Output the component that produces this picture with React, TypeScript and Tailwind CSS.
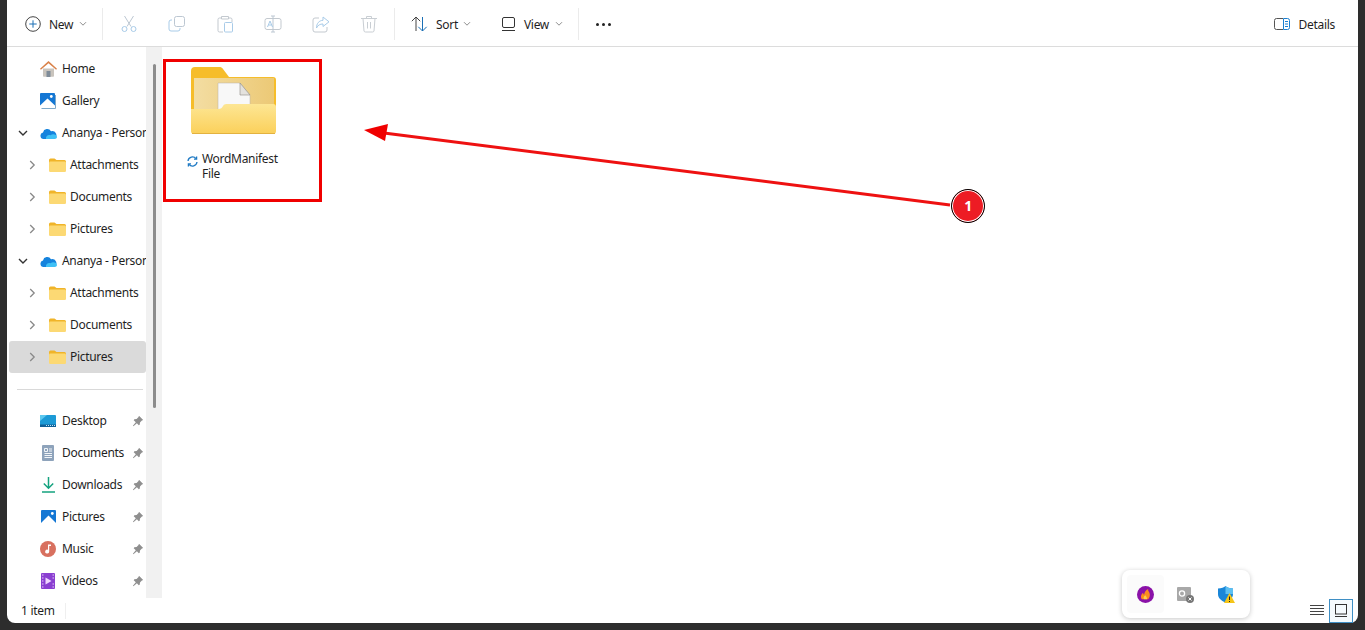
import type { ReactNode } from 'react'

// Shared small icons
function Chevron({ dir }: { dir: 'right' | 'down' }) {
  return (
    <svg width="10" height="10" viewBox="0 0 10 10" fill="none" stroke={dir === 'right' ? '#8a8a8a' : '#333'} strokeWidth={dir === 'right' ? 1.3 : 1.4}>
      {dir === 'right' ? <path d="M3.2 1 7.2 5l-4 4" /> : <path d="M1 3l4 4 4-4" />}
    </svg>
  )
}

function SmallDown() {
  return (
    <svg width="8" height="6" viewBox="0 0 8 6" fill="none" stroke="#8d8d8d" strokeWidth="1">
      <path d="M1 1.2 4 4.2l3-3" />
    </svg>
  )
}

function FolderSmall() {
  return (
    <svg width="17" height="14" viewBox="0 0 17 14">
      <path d="M0 2a1.500 1.500 0 0 1 1.500-1.500h4L7.500 2H15.500a1.500 1.500 0 0 1 1.500 1.500V5H0z" fill="#f0b429" />
      <rect y="3.500" width="17" height="10.500" rx="1.300" fill="#fcd974" />
    </svg>
  )
}

function Pin() {
  return (
    <svg width="12" height="12" viewBox="0 0 12 12" fill="#8f8f8f">
      <path d="M7 .8 11.200 5 9.900 5.500 8 7.400l-.3 2.300-.9.600L4.900 8.300 1.400 11.200l-.5-.5L3.800 7.200 1.700 5.200l.6-.9L4.600 4l1.900-1.900z" />
    </svg>
  )
}

function HomeIcon() {
  return (
    <svg width="17" height="16" viewBox="0 0 17 16">
      <path d="M3 7.500h11V15a.8.8 0 0 1-.8.800H3.800A.8.8 0 0 1 3 15z" fill="#c9c4bd" />
      <rect x="6.500" y="10" width="4" height="6" fill="#7f8c99" />
      <path d="M8.500 0 17 7.800l-.9 1L8.500 2.200.9 8.800 0 7.800z" fill="#d9824a" />
    </svg>
  )
}

function GalleryIcon() {
  return (
    <svg width="16" height="16" viewBox="0 0 16 16">
      <rect width="15" height="15" rx="1" fill="#1477d4" />
      <path d="M0 12.500 7.500 5.500 15 12.500V15H0z" fill="#fff" />
      <path d="M1.500 15.500h14V2" stroke="#7fa9c9" strokeWidth="1" fill="none" />
      <circle cx="11.300" cy="3.500" r="1.400" fill="#fff" />
    </svg>
  )
}

function PictureIcon() {
  return (
    <svg width="15" height="14" viewBox="0 0 15 14">
      <rect width="15" height="14" rx="1" fill="#1477d4" />
      <path d="M0 13 7.500 5.500 15 13v1H0z" fill="#fff" />
      <circle cx="11.300" cy="3.500" r="1.400" fill="#fff" />
    </svg>
  )
}

function Cloud() {
  return (
    <svg width="17" height="11" viewBox="0 0 17 11">
      <path d="M3.500 11A3.300 3.300 0 0 1 3 4.500 4.300 4.300 0 0 1 11 3.200 3.900 3.900 0 0 1 13.500 11z" fill="#1583dd" />
      <path d="M6 11c-.6-2.700 1.900-4.700 4.600-3.800 2-1.900 6.400-.7 6.400 1.800 0 1.300-1.100 2-2.300 2z" fill="#3fc0f5" />
    </svg>
  )
}

function DesktopIcon() {
  return (
    <svg width="16" height="12" viewBox="0 0 16 12">
      <rect width="16" height="12" rx="1" fill="#1c9ad6" />
      <rect y="9.500" width="16" height="2.500" fill="#0f5f96" />
      <path d="M0 0h7L0 6z" fill="#5cc8ef" />
      <path d="M6 10.500h9" stroke="#bfe6f7" strokeWidth="1" strokeDasharray="1 1" />
    </svg>
  )
}

function DocIcon() {
  return (
    <svg width="12" height="16" viewBox="0 0 12 16">
      <rect width="12" height="16" rx="1" fill="#8ea3bb" />
      <path d="M2.500 3.500h3v3h-3zM7 4h3M7 6h3M2.500 8.500h7.500M2.500 10.500h7.500M2.500 12.500h7.500" stroke="#f2f5f8" strokeWidth="1" fill="none" />
    </svg>
  )
}

function DownloadIcon() {
  return (
    <svg width="13" height="16" viewBox="0 0 13 16" fill="none" stroke="#15a37f" strokeWidth="1.500">
      <path d="M6.500 0v11M1.800 6.500l4.700 4.700 4.700-4.700M0 15h13" />
    </svg>
  )
}

function MusicIcon() {
  return (
    <svg width="16" height="16" viewBox="0 0 16 16">
      <circle cx="8" cy="8" r="8" fill="#d8705f" />
      <path d="M8 3.500h3v1.600H9.200V10.500a2 2 0 1 1-1.200-1.800z" fill="#fff" />
    </svg>
  )
}

function VideoIcon() {
  return (
    <svg width="14" height="16" viewBox="0 0 14 16">
      <rect width="14" height="16" rx="1" fill="#8a3fd1" />
      <path d="M4.500 4.500v7l6-3.500z" fill="#f0d6ff" />
      <path d="M1 2h1.500M1 5h1.500M1 8h1.500M1 11h1.500M1 14h1.500M11.500 2H13M11.500 5H13M11.500 11H13M11.500 14H13" stroke="#e6c6fb" strokeWidth="1.200" />
    </svg>
  )
}

// Toolbar icons, the disabled ones are a washed out blue and grey
function ToolIcon({ children }: { children: ReactNode }) {
  return (
    <div className="flex w-[48px] justify-center">
      <svg width="18" height="18" viewBox="0 0 18 18" fill="none" strokeWidth="1">
        {children}
      </svg>
    </div>
  )
}

function Separator() {
  return <div className="h-[32px] w-px bg-[#ebebeb]" />
}

function Toolbar() {
  return (
    <div className="flex h-[47px] shrink-0 items-center border-b border-[#dcdcdc] pt-[2px] text-[#1f1f1f]">
      <div className="flex w-[95px] items-center pl-[18px]">
        <svg width="16" height="16" viewBox="0 0 16 16" fill="none">
          <circle cx="8" cy="8" r="7.300" stroke="#444" strokeWidth="1" />
          <path d="M8 4.300v7.400M4.300 8h7.400" stroke="#1a6fb5" strokeWidth="1" />
        </svg>
        <span className="ml-[8px] pt-[1px]">New</span>
        <span className="ml-[6px] flex"><SmallDown /></span>
      </div>
      <Separator />
      <div className="ml-[2px] flex">
        <ToolIcon>
          <path d="M4.500 1 11 11.500M13.500 1 7 11.500" stroke="#bcc7d2" />
          <circle cx="4.500" cy="14" r="2.500" stroke="#a8cbe8" />
          <circle cx="13.500" cy="14" r="2.500" stroke="#a8cbe8" />
        </ToolIcon>
        <ToolIcon>
          <rect x="6.500" y="1.500" width="10" height="10" rx="2" stroke="#bcc7d2" />
          <path d="M4 5H3a2 2 0 0 0-2 2v7a2 2 0 0 0 2 2h7a2 2 0 0 0 2-2v-1" stroke="#a8cbe8" />
        </ToolIcon>
        <ToolIcon>
          <path d="M5 3H3.500A1.500 1.500 0 0 0 2 4.500v11A1.500 1.500 0 0 0 3.500 17H7M13 3h1.500A1.500 1.500 0 0 1 16 4.500V7M5.500 1.500h7V4h-7z" stroke="#c3c9cf" />
          <rect x="8.500" y="7.500" width="8" height="9.500" rx="1" stroke="#a8cbe8" />
        </ToolIcon>
        <ToolIcon>
          <rect x="1" y="3.500" width="16" height="11" rx="2" stroke="#c3c9cf" />
          <path d="M9 1v16M7 1h4M7 17h4" stroke="#bcc7d2" />
          <path d="M3.500 12 6 6l2.500 6M4.500 10h3" stroke="#a8cbe8" />
        </ToolIcon>
        <ToolIcon>
          <path d="M7 3H3a2 2 0 0 0-2 2v10a2 2 0 0 0 2 2h10a2 2 0 0 0 2-2v-3" stroke="#c3c9cf" />
          <path d="M11 2l6 4.800-6 4.700V9C8 9 6 10 4.500 13c0-4.500 2.500-7.500 6.500-7.700z" stroke="#a8cbe8" />
        </ToolIcon>
        <ToolIcon>
          <path d="M1 3.500h16M6.500 3.500V1.500h5v2M3 3.500l1 12.500a1.500 1.500 0 0 0 1.500 1h7A1.500 1.500 0 0 0 14 16l1-12.500M7.500 7v6.500M10.500 7v6.500" stroke="#c9ced3" />
        </ToolIcon>
      </div>
      <div className="ml-[1px]"><Separator /></div>
      <div className="ml-[16px] flex items-center">
        <svg width="17" height="16" viewBox="0 0 17 16" fill="none" strokeWidth="1">
          <path d="M5 15V1M.8 5.200 5 1l4.200 4.200" stroke="#444" />
          <path d="M11.500 1v14M7.300 10.800l4.200 4.200 4.200-4.200" stroke="#1a6fb5" />
        </svg>
        <span className="ml-[8px] pt-[1px]">Sort</span>
        <span className="ml-[5px] flex"><SmallDown /></span>
      </div>
      <div className="ml-[31px] flex items-center">
        <svg width="13" height="14" viewBox="0 0 13 14" fill="none" stroke="#333" strokeWidth="1">
          <rect x=".5" y=".5" width="12" height="10" rx="1.500" />
          <path d="M0 13.500h13" />
        </svg>
        <span className="ml-[9px] pt-[1px]">View</span>
        <span className="ml-[6px] flex"><SmallDown /></span>
      </div>
      <div className="ml-[15px]"><Separator /></div>
      <div className="ml-[17px] flex gap-[3px]">
        <span className="size-[3px] rounded-full bg-[#222]" />
        <span className="size-[3px] rounded-full bg-[#222]" />
        <span className="size-[3px] rounded-full bg-[#222]" />
      </div>
      <div className="ml-auto flex items-center pr-[23px]">
        <svg width="16" height="12" viewBox="0 0 16 12" fill="none" strokeWidth="1">
          <path d="M9 .5H2.500a2 2 0 0 0-2 2v7a2 2 0 0 0 2 2H9" stroke="#555" />
          <path d="M9.500.5h4a2 2 0 0 1 2 2v7a2 2 0 0 1-2 2h-4zM11 3.500h3M11 6h3M11 8.500h3" stroke="#1a7fd0" />
        </svg>
        <span className="ml-[9px] pt-[1px]">Details</span>
      </div>
    </div>
  )
}

function NavRow({ label, icon, indent = false, arrow, pin = false, selected = false }: {
  label: string
  icon: ReactNode
  indent?: boolean
  arrow?: 'right' | 'down'
  pin?: boolean
  selected?: boolean
}) {
  return (
    <div className={`relative flex h-[32px] items-center overflow-hidden rounded-[3px] ${selected ? 'bg-[#dadada]' : ''}`}>
      <span className={`flex w-[10px] justify-center ${indent ? 'ml-[18px]' : 'ml-[9px]'}`}>
        {arrow && <Chevron dir={arrow} />}
      </span>
      <span className="ml-[11px] flex w-[18px] shrink-0 justify-center">{icon}</span>
      <span className={`whitespace-nowrap text-[#1f1f1f] ${indent ? 'ml-[4px]' : 'ml-[5px]'}`}>{label}</span>
      {pin && <span className="absolute right-[2px] top-[10px] flex"><Pin /></span>}
    </div>
  )
}

function Sidebar() {
  return (
    <div className="flex w-[155px] shrink-0">
      <div className="w-[139px] shrink-0 pl-[2px] pt-[6px]">
        <NavRow label="Home" icon={<HomeIcon />} />
        <NavRow label="Gallery" icon={<GalleryIcon />} />
        <NavRow label="Ananya - Personal" icon={<Cloud />} arrow="down" />
        <NavRow label="Attachments" icon={<FolderSmall />} indent arrow="right" />
        <NavRow label="Documents" icon={<FolderSmall />} indent arrow="right" />
        <NavRow label="Pictures" icon={<FolderSmall />} indent arrow="right" />
        <NavRow label="Ananya - Personal" icon={<Cloud />} arrow="down" />
        <NavRow label="Attachments" icon={<FolderSmall />} indent arrow="right" />
        <NavRow label="Documents" icon={<FolderSmall />} indent arrow="right" />
        <NavRow label="Pictures" icon={<FolderSmall />} indent arrow="right" selected />
        <div className="flex h-[32px] items-center pl-[8px] pr-[3px]">
          <div className="h-px w-full bg-[#d9d9d9]" />
        </div>
        <NavRow label="Desktop" icon={<DesktopIcon />} pin />
        <NavRow label="Documents" icon={<DocIcon />} pin />
        <NavRow label="Downloads" icon={<DownloadIcon />} pin />
        <NavRow label="Pictures" icon={<PictureIcon />} pin />
        <NavRow label="Music" icon={<MusicIcon />} pin />
        <NavRow label="Videos" icon={<VideoIcon />} pin />
      </div>
      <div className="w-[16px] shrink-0 bg-[#f1f1f1] pl-[7px] pt-[17px]">
        <div className="h-[344px] w-[3px] rounded-full bg-[#8c8c8c]" />
      </div>
    </div>
  )
}

function BigFolder() {
  return (
    <svg width="85" height="68" viewBox="0 0 85 68">
      <defs>
        <linearGradient id="front" x1="0" y1="0" x2="0" y2="1">
          <stop offset="0" stopColor="#fde694" />
          <stop offset="1" stopColor="#fbd05a" />
        </linearGradient>
        <linearGradient id="back" x1="0" y1="0" x2="1" y2="0">
          <stop offset="0" stopColor="#f3dda2" />
          <stop offset="1" stopColor="#ecc976" />
        </linearGradient>
      </defs>
      <path d="M0 4a4 4 0 0 1 4-4h24c2 0 3 .6 4 2l6 8h44a3 3 0 0 1 3 3v30H0z" fill="#f6bd2a" />
      <rect x="3" y="11" width="80" height="33" fill="url(#back)" />
      <path d="M27 16h22l10 12v18H27z" fill="#f8f8f8" stroke="#b9b3a8" strokeWidth=".5" />
      <path d="M49 16v12h10z" fill="#e4e2de" stroke="#8f8b83" strokeWidth=".6" />
      <path d="M0 42h27c3 0 4-1 5-3s3-2 5-2h45a3 3 0 0 1 3 3v24a3 3 0 0 1-3 3H3a3 3 0 0 1-3-3z" fill="url(#front)" />
      <path d="M1 66.500h83" stroke="#e3b240" strokeWidth="1" />
    </svg>
  )
}

function FileArea() {
  return (
    <div className="min-w-0 flex-1 pl-[29px] pt-[20px]">
      <BigFolder />
      <div className="ml-[-4px] mt-[16px] flex leading-[15px] text-[#1f1f1f]">
        <svg className="mt-[5px]" width="11" height="11" viewBox="0 0 11 11" fill="none" stroke="#1f7ac4" strokeWidth="1.300">
          <path d="M1 5a4.500 4.500 0 0 1 8-2.300M10 6a4.500 4.500 0 0 1-8 2.300" />
          <path d="M9.600.6v2.600H7M1.400 10.400V7.800H4" />
        </svg>
        <span className="ml-[4px] w-[84px]">WordManifest File</span>
      </div>
    </div>
  )
}

function StatusBar() {
  return (
    <div className="flex h-[25px] shrink-0 items-center pl-[14px] pr-[5px] text-[#1f1f1f]">
      <span>1 item</span>
      <div className="ml-[10px] h-[16px] w-px bg-[#efefef]" />
      <div className="ml-auto flex items-center gap-[5px]">
        <svg width="14" height="11" viewBox="0 0 14 11" stroke="#444" strokeWidth="1">
          <path d="M0 .5h14M0 3.500h14M0 6.500h14M0 9.500h14" />
        </svg>
        <div className="flex h-[24px] w-[24px] items-center justify-center border border-[#3f8fc4] bg-[#f4fafd]">
          <svg width="12" height="13" viewBox="0 0 12 13" fill="none" stroke="#333" strokeWidth="1">
            <rect x=".5" y=".5" width="11" height="9.500" />
            <path d="M0 12.500h12" />
          </svg>
        </div>
      </div>
    </div>
  )
}

// Overlays: the red callout drawn on the screenshot and the tray flyout
function Annotations() {
  return (
    <>
      <div className="absolute left-[163px] top-[59px] h-[143px] w-[159px] border-[3px] border-[#f00000]" />
      <svg className="absolute left-[360px] top-[120px]" width="600" height="95" viewBox="0 0 600 95">
        <path d="M590 85 24 13" stroke="#ee1111" strokeWidth="3" />
        <path d="M4 10 28 4l-3 17z" fill="#f00000" />
      </svg>
      <div className="absolute left-[951px] top-[189px] flex size-[34px] items-center justify-center rounded-full border border-black bg-[#ed1c24] text-[14px] font-bold text-white shadow-[inset_0_0_0_1px_#fff]">
        1
      </div>
      <div className="absolute left-[1122px] top-[570px] flex h-[48px] w-[128px] items-center rounded-[8px] bg-white pl-[5px] shadow-[0_1px_5px_rgba(0,0,0,0.22)]">
        <div className="flex h-[38px] w-[37px] items-center justify-center rounded-[4px] bg-[#fbfbfb]">
          <svg width="17" height="17" viewBox="0 0 16 16">
            <circle cx="8" cy="8" r="8" fill="#8a12a8" />
            <path d="M4.500 12.500C3 10 4 7.500 5.800 6.300c0 1.100.4 1.700 1 1.800C6.800 6 8.200 3.800 10.500 2.800c-.3 1.700.6 2.300 1.200 3.500.9 2 .3 4.500-1.200 6.200z" fill="#fb8c1e" />
            <path d="M6.500 12.500c-.8-1.500 0-3 1.500-3.800.2 1 1.600 1.500 1.500 3.800z" fill="#fdd04a" />
          </svg>
        </div>
        <svg className="ml-[13px]" width="17" height="17" viewBox="0 0 17 17">
          <rect y="1" width="14" height="14" rx="1" fill="#a8a8a8" />
          <circle cx="5" cy="7.500" r="2.600" fill="none" stroke="#fff" strokeWidth="1.300" />
          <circle cx="13" cy="13" r="4" fill="#777" />
          <path d="M11.500 11.500l3 3M14.500 11.500l-3 3" stroke="#fff" strokeWidth="1" />
        </svg>
        <svg className="ml-[24px]" width="17" height="17" viewBox="0 0 17 17">
          <path d="M7.500 0C6 1.500 3.500 2.500 0 2.500V8c0 4 3 6.500 7.500 8.500C12 14.500 15 12 15 8V2.500C11.500 2.500 9 1.500 7.500 0z" fill="#1a86d8" />
          <path d="M7.500 0C9 1.500 11.500 2.500 15 2.500V8H7.500z" fill="#5cc0f2" />
          <path d="M11.500 7 17 17H6z" fill="#f5c518" />
          <path d="M11.500 10.500v3.500M11.500 15v1" stroke="#222" strokeWidth="1" />
        </svg>
      </div>
    </>
  )
}

function App() {
  return (
    <div className="relative h-[630px] w-[1365px] overflow-hidden bg-[#2d2d2d] px-[7px] pb-[7px] text-[12px] leading-[16px] tracking-[-0.3px] [font-family:'Noto_Sans',sans-serif]">
      <div className="flex h-full flex-col rounded-b-[8px] bg-white">
        <Toolbar />
        <div className="flex min-h-0 flex-1">
          <Sidebar />
          <FileArea />
        </div>
        <StatusBar />
      </div>
      <Annotations />
    </div>
  )
}

export default App
